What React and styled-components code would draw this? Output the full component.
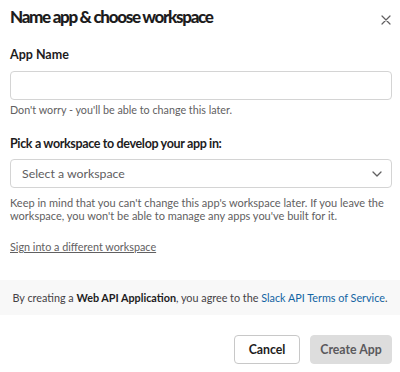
import React from 'react'
import styled, { createGlobalStyle } from 'styled-components'

const GlobalStyle = createGlobalStyle`
  html, body {
    margin: 0;
    padding: 0;
    background: #ffffff;
  }
  body {
    font-family: Lato, "Noto Sans", sans-serif;
    color: #1d1c1d;
  }
`

const Modal = styled.div`
  width: 400px;
  height: 372px;
  background: #fff;
  display: flex;
  flex-direction: column;
  overflow: hidden;
`

const Body = styled.div`
  padding: 5px 8px 0 10px;
  display: flex;
  flex-direction: column;
`

const Header = styled.div`
  display: flex;
  align-items: center;
  justify-content: space-between;
  height: 24px;
`

const Title = styled.h1`
  margin: 0;
  font-size: 17px;
  line-height: 24px;
  font-weight: 900;
  letter-spacing: -1.3px;
  color: #1d1c1d;
`

const CloseButton = styled.button`
  border: 0;
  background: none;
  padding: 0;
  width: 20px;
  height: 20px;
  display: flex;
  align-items: center;
  justify-content: center;
  margin-right: -4px;
  margin-top: 6px;
  color: #616061;
  cursor: pointer;
`

const Field = styled.div`
  display: flex;
  flex-direction: column;
  margin-top: ${p => p.$top}px;
`

const Label = styled.label`
  font-size: 12.5px;
  line-height: 18px;
  font-weight: 700;
  letter-spacing: ${p => p.$tight ? '-0.35px' : '0'};
  margin-bottom: ${p => p.$gap}px;
`

const Input = styled.input`
  box-sizing: border-box;
  height: 29px;
  width: 100%;
  border: 1px solid #d4d4d4;
  border-radius: 4px;
  padding: 0 10px;
  font-family: inherit;
  font-size: 12.5px;
  outline: none;
`

const Select = styled.div`
  box-sizing: border-box;
  height: 29px;
  border: 1px solid #d4d4d4;
  border-radius: 4px;
  padding: 0 9px 0 11px;
  display: flex;
  align-items: center;
  justify-content: space-between;
  font-size: 12.3px;
  color: #5e5d60;
`

const Hint = styled.p`
  margin: ${p => p.$top}px 0 0;
  font-size: ${p => p.$small ? 10.75 : 11}px;
  line-height: 13px;
  color: #616061;
`

const SignLink = styled.a`
  margin-top: 18px;
  font-size: 10.8px;
  line-height: 14px;
  color: #616061;
  text-decoration: underline;
  align-self: flex-start;
`

const Notice = styled.div`
  margin-top: 26px;
  height: 35px;
  background: #f8f8f8;
  display: flex;
  align-items: center;
  justify-content: center;
  font-size: 10.8px;
  color: #454245;

  b {
    color: #1d1c1d;
    font-weight: 700;
  }

  a {
    color: #1264a3;
    text-decoration: none;
  }
`

const Footer = styled.div`
  display: flex;
  justify-content: flex-end;
  gap: 10px;
  padding: 20px 8px 0 0;
`

const Button = styled.button`
  box-sizing: border-box;
  height: 29px;
  width: ${p => (p.$primary ? 82 : 66)}px;
  padding: 0;
  border-radius: 4px;
  font-family: inherit;
  font-size: 12.3px;
  font-weight: 700;
  border: 1px solid ${p => (p.$primary ? '#dddddd' : '#c8c8c8')};
  background: ${p => (p.$primary ? '#dddddd' : '#ffffff')};
  color: ${p => (p.$primary ? '#5a595c' : '#1d1c1d')};
`

const Chevron = () => (
  <svg width="10" height="6" viewBox="0 0 10 6" fill="none">
    <path d="M1 1l4 4 4-4" stroke="#616061" strokeWidth="1.3" strokeLinecap="round" strokeLinejoin="round" />
  </svg>
)

const CloseIcon = () => (
  <svg width="10" height="10" viewBox="0 0 10 10" fill="none">
    <path d="M1 1l8 8M9 1l-8 8" stroke="#616061" strokeWidth="1.2" strokeLinecap="round" />
  </svg>
)

export default function App() {
  return (
    <>
      <GlobalStyle />
      <Modal>
        <Body>
          <Header>
            <Title>Name app &amp; choose workspace</Title>
            <CloseButton aria-label="Close"><CloseIcon /></CloseButton>
          </Header>

          <Field $top={17}>
            <Label $gap={7}>App Name</Label>
            <Input />
            <Hint $top={3} $small>Don't worry - you'll be able to change this later.</Hint>
          </Field>

          <Field $top={19}>
            <Label $gap={6} $tight>Pick a workspace to develop your app in:</Label>
            <Select>
              <span>Select a workspace</span>
              <Chevron />
            </Select>
            <Hint $top={8}>
              Keep in mind that you can't change this app's workspace later. If you leave the
              workspace, you won't be able to manage any apps you've built for it.
            </Hint>
          </Field>

          <SignLink href="#">Sign into a different workspace</SignLink>
        </Body>

        <Notice>
          <span>
            By creating a <b>Web API Application</b>, you agree to the{' '}
            <a href="#">Slack API Terms of Service</a>.
          </span>
        </Notice>

        <Footer>
          <Button>Cancel</Button>
          <Button $primary>Create App</Button>
        </Footer>
      </Modal>
    </>
  )
}
